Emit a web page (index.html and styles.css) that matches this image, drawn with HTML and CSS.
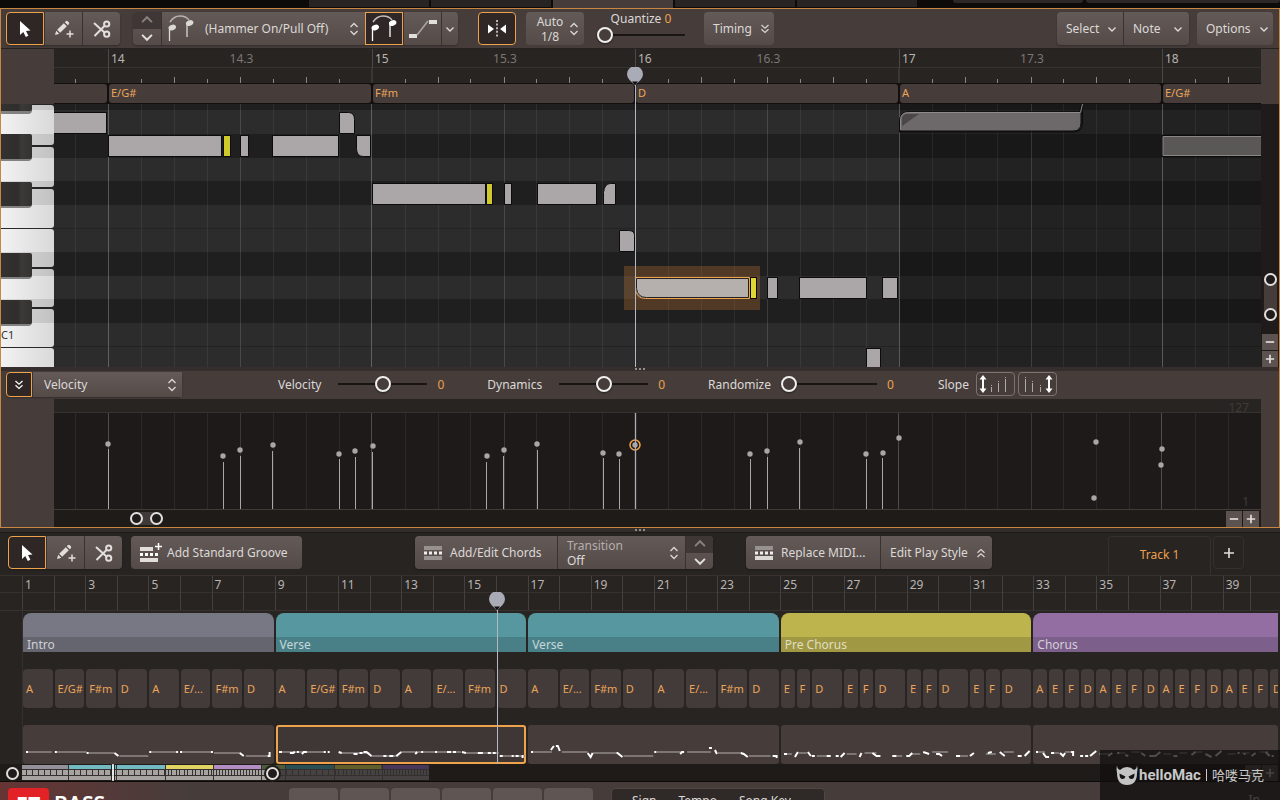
FILE: index.html
```html
<!DOCTYPE html>
<html lang="en">
<head>
<meta charset="UTF-8" />
<meta name="viewport" content="width=device-width, initial-scale=1.0"/>
<title>EZ Bass - Grid Editor</title>
<link rel="stylesheet" href="styles.css">
</head>
<body>

<svg class="defs" aria-hidden="true">
  <symbol id="i-arrow" viewBox="0 0 20 20"><path d="M5 2v14l3.300-3 2.500 5 2.600-1.300-2.400-4.700 4.500-.4z" fill="#fff"/></symbol>
  <symbol id="i-pencil" viewBox="0 0 20 20"><path d="M1 16l1.200-4.200 3 3zM3.200 10.800l6.600-6.600 3 3-6.600 6.600zM10.800 3.200l1-1q1-.8 2 .1l1 1q.9 1 0 2l-1 1z" fill="#e2dedc"/><path d="M16 11.500v7M12.500 15h7" stroke="#e2dedc" stroke-width="1.500"/></symbol>
  <symbol id="i-cut" viewBox="0 0 20 20"><g fill="none" stroke="#e2dedc" stroke-width="2"><path d="M2 4l10.500 9.500M2.500 17L12.500 7"/><circle cx="14.700" cy="5" r="2.600"/><circle cx="14.700" cy="15.200" r="2.600"/></g></symbol>
  <symbol id="i-down" viewBox="0 0 10 10"><path d="M1.500 3.500L5 7l3.500-3.500" fill="none" stroke="currentColor" stroke-width="1.400"/></symbol>
  <symbol id="i-up" viewBox="0 0 10 10"><path d="M1.500 6.500L5 3l3.500 3.500" fill="none" stroke="currentColor" stroke-width="1.400"/></symbol>
  <symbol id="i-updown" viewBox="0 0 10 14"><path d="M1.500 5L5 1.500 8.500 5M1.500 9L5 12.500 8.500 9" fill="none" stroke="currentColor" stroke-width="1.300"/></symbol>
  <symbol id="i-dbldown" viewBox="0 0 10 10"><path d="M1.500 1L5 4.200 8.500 1M1.500 5.300L5 8.500l3.500-3.200" fill="none" stroke="currentColor" stroke-width="1.200"/></symbol>
  <symbol id="i-dblup" viewBox="0 0 10 10"><path d="M1.500 4.700L5 1.500l3.500 3.200M1.500 9L5 5.800 8.500 9" fill="none" stroke="currentColor" stroke-width="1.200"/></symbol>
  <symbol id="i-slur" viewBox="0 0 28 28"><path d="M3 7Q7 1 13 1T22 5" fill="none" stroke="currentColor" stroke-width="1.500" opacity=".7"/><path d="M2.500 26V12M20 22V7" stroke="currentColor" stroke-width="1.300"/><ellipse cx="5.300" cy="12.500" rx="3.800" ry="2.800" transform="rotate(-22 5.300 12.500)" fill="currentColor"/><ellipse cx="22.700" cy="8" rx="3.800" ry="2.800" transform="rotate(-22 22.700 8)" fill="currentColor"/></symbol>
  <symbol id="i-slide" viewBox="0 0 30 24"><path d="M1 17h8v4H1zM21 3h8v4h-8z" fill="#e2dedc"/><path d="M9 18L20 4" stroke="#aaa4a2" stroke-width="1.600"/></symbol>
  <symbol id="i-groove" viewBox="0 0 18 16"><path d="M0 1h18v4H0z" fill="#97918f"/><path d="M0 11h18v4H0z" fill="currentColor"/><path d="M0 6.500h3v3H0zM5 6.500h3v3H5zM10 6.500h3v3h-3zM15 6.500h3v3h-3z" fill="#f0eeec"/></symbol>
  <symbol id="i-pin" viewBox="0 0 18 20"><path d="M9 19Q7 16 3.500 13A8 8 0 1 1 14.500 13Q11 16 9 19z" fill="#a9acb6"/><path d="M6 14.500h6L9 18.500z" fill="#111"/></symbol>
</svg>

<div class="top-strip">
  <span class="top-tab"></span><span class="top-tab"></span><span class="top-tab active"></span><span class="top-tab"></span><span class="top-tab"></span>
  <span class="top-box"></span><span class="top-box wide"></span>
</div>

<section class="editor">
  <div class="toolbar">
    <div class="group">
      <button class="btn tool on" aria-label="Select tool"><svg class="i20"><use href="#i-arrow"/></svg></button>
      <button class="btn tool" aria-label="Draw tool"><svg class="i20"><use href="#i-pencil"/></svg></button>
      <button class="btn tool" aria-label="Cut tool"><svg class="i20"><use href="#i-cut"/></svg></button>
    </div>
    <div class="group articulation">
      <div class="stepper">
        <button class="off" aria-label="Previous articulation"><svg class="i14"><use href="#i-up"/></svg></button>
        <button aria-label="Next articulation"><svg class="i14"><use href="#i-down"/></svg></button>
      </div>
      <div class="pick pick-art">
        <svg class="i28"><use href="#i-slur"/></svg>
        <select aria-label="Articulation"><option>(Hammer On/Pull Off)</option></select>
        <svg class="updown"><use href="#i-updown"/></svg>
      </div>
      <button class="btn tool on" aria-label="Hammer on"><svg class="i28"><use href="#i-slur"/></svg></button>
      <button class="btn tool" aria-label="Slide"><svg class="i30"><use href="#i-slide"/></svg></button>
      <button class="btn thin" aria-label="More articulations"><svg class="i10"><use href="#i-down"/></svg></button>
    </div>
    <button class="btn tool on snap" aria-label="Snap to grid"><svg class="i20" viewBox="0 0 20 20"><path d="M1 5.500v9l6-4.500zM19 5.500v9l-6-4.500z" fill="#fff"/><path d="M10 1v18" stroke="#fff" stroke-width="1.300" stroke-dasharray="2 1.600"/></svg></button>
    <div class="pick pick-grid">
      <div class="stack">
        <label for="grid-size">Auto</label>
        <select id="grid-size"><option>1/8</option></select>
      </div>
      <svg class="updown"><use href="#i-updown"/></svg>
    </div>
    <div class="quantize">
      <div><label for="quantize">Quantize</label> <output>0</output></div>
      <input type="range" id="quantize" min="0" max="100" value="0">
    </div>
    <button class="btn spread timing">Timing <svg class="i10"><use href="#i-dbldown"/></svg></button>
    <div class="group menus">
      <button class="btn spread menu">Select <svg class="i10"><use href="#i-down"/></svg></button>
      <button class="btn spread menu">Note <svg class="i10"><use href="#i-down"/></svg></button>
    </div>
    <button class="btn spread options">Options <svg class="i10"><use href="#i-down"/></svg></button>
  </div>

  <div class="roll">
    <div class="keys">
      <svg viewBox="0 0 53 263" preserveAspectRatio="none" aria-hidden="true">
        <defs>
          <linearGradient id="ivory"><stop offset="0" stop-color="#f4f4f4"/><stop offset="1" stop-color="#d9d9d9"/></linearGradient>
          <linearGradient id="ebony"><stop offset="0" stop-color="#353232"/><stop offset=".6" stop-color="#302d2d"/><stop offset=".7" stop-color="#3c3939"/><stop offset="1" stop-color="#343131"/></linearGradient>
        </defs>
        <path d="M0 0h53v263H0z" fill="#2b2828"/>
        <g fill="url(#ivory)">
          <rect x="-4" y="1" width="57" height="40" rx="3"/><rect x="-4" y="43" width="57" height="40" rx="3"/>
          <rect x="-4" y="85" width="57" height="39" rx="3"/><rect x="-4" y="125" width="57" height="38" rx="3"/>
          <rect x="-4" y="165" width="57" height="38" rx="3"/><rect x="-4" y="205" width="57" height="38" rx="3"/>
          <rect x="-4" y="244" width="57" height="38" rx="3"/>
        </g>
        <path d="M0 0h53v6H0zM0 30h53v24H0zM0 77h53v24H0zM0 148h53v24H0zM0 195h53v24H0z" fill="#000" opacity=".1"/>
        <g fill="#555" opacity=".7"><rect x="-4" y="-10" width="35" height="20" rx="4"/><rect x="-4" y="33" width="35" height="24" rx="4"/><rect x="-4" y="80" width="35" height="24" rx="4"/><rect x="-4" y="151" width="35" height="24" rx="4"/><rect x="-4" y="198" width="35" height="24" rx="4"/></g>
        <g fill="url(#ebony)"><rect x="-4" y="-10" width="35" height="17" rx="2"/><rect x="-4" y="30" width="35" height="25" rx="2"/><rect x="-4" y="78" width="35" height="24" rx="2"/><rect x="-4" y="149" width="35" height="24" rx="2"/><rect x="-4" y="196" width="35" height="24" rx="2"/></g>
      </svg>
      <span class="key-name">C1</span>
    </div>

    <div class="roll-main">
      <div class="bars ruler">
        <div></div>
        <div class="bar"><span>14</span><small>14.3</small></div>
        <div class="bar"><span>15</span><small>15.3</small></div>
        <div class="bar"><span>16</span><small>16.3</small></div>
        <div class="bar"><span>17</span><small>17.3</small></div>
        <div class="bar"><span>18</span></div>
      </div>
      <svg class="ticks" viewBox="0 0 1207 15" preserveAspectRatio="none" aria-hidden="true">
        <path d="M54.500 0v15M318 0v15M581.500 0v15M845 0v15M1108.500 0v15" stroke="#4c4846"/>
        <path d="M21.500 11v4M87.500 11v4M153.500 11v4M219.500 11v4M285.500 11v4M351.500 11v4M416.500 11v4M482.500 11v4M548.500 11v4M614.500 11v4M680.500 11v4M746.500 11v4M812.500 11v4M878.500 11v4M943.500 11v4M1009.500 11v4M1075.500 11v4M1141.500 11v4M120.500 9v6M186.500 9v6M252.500 9v6M384.500 9v6M450.500 9v6M515.500 9v6M647.500 9v6M713.500 9v6M779.500 9v6M911.500 9v6M977.500 9v6M1042.500 9v6M1174.500 9v6" stroke="#8a8583"/>
      </svg>
      <div class="bars chord-lane">
        <span></span><span>E/G#</span><span>F#m</span><span>D</span><span>A</span><span>E/G#</span>
      </div>
      <svg class="canvas" viewBox="0 0 1207 263" preserveAspectRatio="none" role="img" aria-label="Notes">
        <path d="M0 0h1207v263H0z" fill="#2c2c2c"/>
        <path d="M0 0h1207v6H0zM0 30h1207v24H0zM0 77h1207v24H0zM0 148h1207v24H0zM0 195h1207v24H0z" fill="#1f1f1f"/>
        <path d="M0 124.500h1207M0 242.500h1207" stroke="#232323"/>
        <path d="M845 0h362v263H845z" fill="#000" opacity=".22"/>
        <path d="M21.500 0v263M87.500 0v263M120.500 0v263M153.500 0v263M219.500 0v263M252.500 0v263M285.500 0v263M351.500 0v263M384.500 0v263M416.500 0v263M482.500 0v263M515.500 0v263M548.500 0v263M614.500 0v263M647.500 0v263M680.500 0v263M746.500 0v263M779.500 0v263M812.500 0v263M878.500 0v263M911.500 0v263M943.500 0v263M1009.500 0v263M1042.500 0v263M1075.500 0v263M1141.500 0v263M1174.500 0v263" stroke="#fff" opacity=".06"/>
        <path d="M186.500 0v263M450.500 0v263M713.500 0v263M977.500 0v263" stroke="#fff" opacity=".13"/>
        <path d="M54.500 0v263M317.500 0v263M845.500 0v263M1108.500 0v263" stroke="#fff" opacity=".25"/>
        <rect x="570" y="162" width="136" height="44" fill="#e28c3c" opacity=".25"/>
        <g fill="#aba7a8" stroke="#0c0c0c">
          <rect x="-2.500" y="8.500" width="55" height="21"/>
          <rect x="54.500" y="31.500" width="113" height="21"/>
          <rect x="186.500" y="31.500" width="8" height="21"/>
          <rect x="218.500" y="31.500" width="66" height="21"/>
          <path d="M285.500 8.500h9q6 0 6 7v14h-15zM302.500 31.500h14v21h-7q-7 0-7-8z"/>
          <rect x="318.500" y="79.500" width="113" height="21"/>
          <rect x="450.500" y="79.500" width="7" height="21"/>
          <rect x="483.500" y="79.500" width="59" height="21"/>
          <path d="M561.500 79.500v21h-12v-12q1-9 7-9zM565.500 126.500h9q6 0 6 5v16h-15z"/>
          <rect x="713.500" y="173.500" width="10" height="21"/>
          <rect x="745.500" y="173.500" width="67" height="21"/>
          <rect x="828.500" y="173.500" width="15" height="21"/>
          <rect x="812.500" y="244.500" width="14" height="21"/>
        </g>
        <path d="M581.500 173.500h114v21h-104q-9 0-10-9z" fill="#b5b0ad" stroke="#222"/>
        <path d="M581.500 173.500h114v21h-104q-9 0-10-9z" fill="none" stroke="#eda24b"/>
        <path d="M582.500 174.500h112v19h-102q-9 0-10-9z" fill="none" stroke="#222"/>
        <g fill="#cfc92c" stroke="#0c0c0c"><rect x="169.500" y="31.500" width="7" height="21"/><rect x="432.500" y="79.500" width="6" height="21"/><rect x="696.500" y="173.500" width="6" height="21" fill="#ded632"/></g>
        <path d="M845.500 28.500V17q0-9 9-9h171l2-8M1028.500 0v20q-1 8-8 8h-175" fill="none" stroke="#0c0c0c"/>
        <path d="M846 27V16q0-8 8-8h173v11q0 8-8 8z" fill="#6d696a" stroke="#0c0c0c"/>
        <path d="M846.500 26V16q0-7.500 8-7.500h172L1028.500 0" fill="none" stroke="#8e8a8a"/>
        <path d="M848 22V14q1-4 5-4h12z" fill="#4b4748"/>
        <rect x="1108.500" y="31.500" width="101" height="21" fill="#5a5757" stroke="#0c0c0c"/>
        <path d="M1207 32.500h-98v19h98" fill="none" stroke="#8a8686"/>
      </svg>
      <div class="playhead roll-head"><svg><use href="#i-pin"/></svg></div>
    </div>

    <div class="gutter">
      <div class="v-range"><button class="knob" aria-label="Zoom top"></button><button class="knob" aria-label="Zoom bottom"></button></div>
      <button class="mini" aria-label="Zoom out vertically"><svg viewBox="0 0 12 12"><path d="M1 6h10" stroke="#e2dedc" stroke-width="2"/></svg></button>
      <button class="mini" aria-label="Zoom in vertically"><svg viewBox="0 0 12 12"><path d="M1 6h10M6 1v10" stroke="#e2dedc" stroke-width="2"/></svg></button>
    </div>
  </div>

  <div class="splitter"><i></i><i></i><i></i></div>

  <div class="toolbar lane-bar">
    <div class="group">
      <button class="btn on fold" aria-label="Collapse lane"><svg class="i10"><use href="#i-dbldown"/></svg></button>
      <div class="pick pick-lane">
        <select aria-label="Lane"><option>Velocity</option></select>
        <svg class="updown"><use href="#i-updown"/></svg>
      </div>
    </div>
    <div class="slider first"><label for="velocity">Velocity</label><input type="range" id="velocity" value="50"><output>0</output></div>
    <div class="slider"><label for="dynamics">Dynamics</label><input type="range" id="dynamics" value="50"><output>0</output></div>
    <div class="slider wide"><label for="randomize">Randomize</label><input type="range" id="randomize" value="0"><output>0</output></div>
    <div class="slope">
      <span>Slope</span>
      <button aria-label="Slope up"><svg viewBox="0 0 36 20"><path d="M6 1l3.500 4.500h-2.500v9h2.500L6 19l-3.500-4.500h2.500v-9H2.500z" fill="#fff"/><path d="M14.500 13v5M21.500 9v9M28.500 5v13M14.500 11v1M21.500 7v1M28.500 3v1" stroke="#aaa"/></svg></button>
      <button aria-label="Slope down"><svg viewBox="0 0 36 20"><path d="M30 1l3.500 4.500h-2.500v9h2.500L30 19l-3.500-4.500h2.500v-9h-2.500z" fill="#fff"/><path d="M21.500 13v5M13.500 9v9M6.500 5v13M21.500 11v1M13.500 7v1M6.500 3v1" stroke="#aaa"/></svg></button>
    </div>
  </div>

  <div class="lane">
    <div class="lane-head">127</div>
    <div class="lane-graph">
      <svg class="canvas" viewBox="0 0 1207 96" preserveAspectRatio="none" role="img" aria-label="Velocities">
        <path d="M21.500 0v96M87.500 0v96M120.500 0v96M153.500 0v96M219.500 0v96M252.500 0v96M285.500 0v96M351.500 0v96M384.500 0v96M416.500 0v96M482.500 0v96M515.500 0v96M548.500 0v96M614.500 0v96M647.500 0v96M680.500 0v96M746.500 0v96M779.500 0v96M812.500 0v96M878.500 0v96M911.500 0v96M943.500 0v96M1009.500 0v96M1042.500 0v96M1075.500 0v96M1141.500 0v96M1174.500 0v96" stroke="#fff" opacity=".06"/>
        <path d="M186.500 0v96M450.500 0v96M713.500 0v96M977.500 0v96" stroke="#fff" opacity=".13"/>
        <path d="M54.500 0v96M317.500 0v96M844.500 0v96M1107.500 0v96" stroke="#fff" opacity=".22"/>
        <path d="M54.500 36v60M169.500 49v47M186.500 43v53M218.500 38v58M285.500 46v50M301.500 44v52M318.500 39v57M432.500 49v47M449.500 43v53M483.500 37v59M549.500 45v51M565.500 46v50M696.500 46v50M713.500 44v52M745.500 35v61M812.500 46v50M828.500 45v51" stroke="#aaa6a6"/>
        <g fill="#aaa6a4">
          <circle cx="54" cy="31" r="2.700"/><circle cx="169" cy="43" r="2.700"/><circle cx="186" cy="37" r="2.700"/><circle cx="219" cy="32" r="2.700"/><circle cx="285" cy="41" r="2.700"/><circle cx="301" cy="38" r="2.700"/><circle cx="319" cy="33" r="2.700"/>
          <circle cx="433" cy="43" r="2.700"/><circle cx="450" cy="37" r="2.700"/><circle cx="483" cy="31" r="2.700"/><circle cx="549" cy="40" r="2.700"/><circle cx="565" cy="41" r="2.700"/><circle cx="581" cy="32" r="2.700"/>
          <circle cx="696" cy="41" r="2.700"/><circle cx="713" cy="38" r="2.700"/><circle cx="746" cy="29" r="2.700"/><circle cx="812" cy="41" r="2.700"/><circle cx="829" cy="40" r="2.700"/><circle cx="845" cy="25" r="2.700"/>
          <circle cx="1042" cy="29" r="2.700"/><circle cx="1040" cy="85" r="2.700"/><circle cx="1108" cy="36" r="2.700"/><circle cx="1107" cy="52" r="2.700"/>
        </g>
        <circle cx="581" cy="32" r="5" fill="none" stroke="#f2a24c" stroke-width="1.500"/>
        <path d="M581.500 0v96" stroke="#a9acb6" stroke-width="1.300"/>
      </svg>
      <span class="lane-min">1</span>
    </div>
    <div class="lane-scroll">
      <div class="h-range"><button class="knob" aria-label="Scroll start"></button><button class="knob" aria-label="Scroll end"></button></div>
      <button class="mini" aria-label="Zoom out"><svg viewBox="0 0 12 12"><path d="M1 6h10" stroke="#e2dedc" stroke-width="2"/></svg></button>
      <button class="mini" aria-label="Zoom in"><svg viewBox="0 0 12 12"><path d="M1 6h10M6 1v10" stroke="#e2dedc" stroke-width="2"/></svg></button>
    </div>
  </div>
</section>

<div class="splitter dark"><i></i><i></i><i></i></div>

<section class="song">
  <div class="toolbar song-bar">
    <div class="group">
      <button class="btn tool on" aria-label="Select tool"><svg class="i20"><use href="#i-arrow"/></svg></button>
      <button class="btn tool" aria-label="Draw tool"><svg class="i20"><use href="#i-pencil"/></svg></button>
      <button class="btn tool" aria-label="Cut tool"><svg class="i20"><use href="#i-cut"/></svg></button>
    </div>
    <button class="btn groove"><svg class="i24" viewBox="0 0 24 20"><path d="M0 4h13v4H0zM0 15h18v4H0z" fill="#e2dedc"/><path d="M0 10h3v3H0zM5 10h3v3H5zM10 10h3v3h-3zM15 10h3v3h-3z" fill="#fff"/><path d="M18.500 0v7M15 3.500h7" stroke="#fff" stroke-width="1.500"/></svg>Add Standard Groove</button>
    <div class="group chords-group">
      <button class="btn chords"><svg class="i18 dim"><use href="#i-groove"/></svg>Add/Edit Chords</button>
      <div class="pick pick-trans">
        <div class="stack left">
          <label for="transition">Transition</label>
          <select id="transition"><option>Off</option></select>
        </div>
        <svg class="updown"><use href="#i-updown"/></svg>
      </div>
      <div class="stepper">
        <button class="off" aria-label="Previous transition"><svg class="i14"><use href="#i-up"/></svg></button>
        <button aria-label="Next transition"><svg class="i14"><use href="#i-down"/></svg></button>
      </div>
    </div>
    <div class="group midi-group">
      <button class="btn midi"><svg class="i18"><use href="#i-groove"/></svg>Replace MIDI...</button>
      <button class="btn spread style">Edit Play Style <svg class="i10"><use href="#i-dblup"/></svg></button>
    </div>
    <div class="tracks">
      <button class="track-tab">Track 1</button>
      <button class="track-add" aria-label="Add track"><svg class="i12" viewBox="0 0 12 12"><path d="M1 6h10M6 1v10" stroke="#e2dedc" stroke-width="1.600"/></svg></button>
    </div>
  </div>

  <div class="arranger">
    <div class="song-ruler">
      <span>1</span><span>3</span><span>5</span><span>7</span><span>9</span><span>11</span><span>13</span><span>15</span><span>17</span><span>19</span><span>21</span><span>23</span><span>25</span><span>27</span><span>29</span><span>31</span><span>33</span><span>35</span><span>37</span><span>39</span>
    </div>
    <div class="song-lanes">
      <div class="parts">
        <div class="part intro">Intro</div>
        <div class="part verse">Verse</div>
        <div class="part verse">Verse</div>
        <div class="part pre">Pre Chorus</div>
        <div class="part chorus">Chorus</div>
      </div>
      <div class="chords-row">
        <span>A</span><span>E/G#</span><span>F#m</span><span>D</span><span>A</span><span>E/...</span><span>F#m</span><span>D</span>
        <span>A</span><span>E/G#</span><span>F#m</span><span>D</span><span>A</span><span>E/...</span><span>F#m</span><span>D</span>
        <span>A</span><span>E/...</span><span>F#m</span><span>D</span><span>A</span><span>E/...</span><span>F#m</span><span>D</span>
        <span class="half">E</span><span class="half">F</span><span>D</span><span class="half">E</span><span class="half">F</span><span>D</span>
        <span class="half">E</span><span class="half">F</span><span>D</span><span class="half">E</span><span class="half">F</span><span>D</span>
        <span class="half">A</span><span class="half">E</span><span class="half">F</span><span class="half">D</span><span class="half">A</span><span class="half">E</span><span class="half">F</span><span class="half">D</span>
        <span class="half">A</span><span class="half">E</span><span class="half">F</span><span class="half">D</span><span class="half">A</span><span class="half">E</span><span class="half">F</span><span class="half cut">D</span>
      </div>
      <div class="parts clips">
        <div class="clip"><svg viewBox="0 0 252 38" preserveAspectRatio="none"><path d="M4 27h25M33 27h31M66 28h26M97 31h29M129 27h26M160 27h30M192 28h27M224 31h22" class="long"/><path d="M3 27h2M32 27h2M64 28h2M92 28l4 3M127 27h2M154 27h2M158 27h2M189 27h2M218 28l4 3M246 31h2v-4" class="short"/></svg></div>
        <div class="clip selected"><svg viewBox="0 0 252 38" preserveAspectRatio="none"><path d="M4 27h46M64 28h30M95 31h28M126 27h60M190 28h34M226 31h24" class="long"/><path d="M3 27h3M14 28h3l2-1M21 27h2M26 29l2-2h3M48 27h2M52 27h2M63 27l3 1M78 29h4M84 28h3M88 27h3l5 4M108 31h3M114 31h4M121 31l5-4M140 29l2-2M146 27h2M160 27h2M172 27h4M178 27h3M187 27l4 1M203 28h5M213 28h3M218 28h3M225 31h3M237 31h2M241 31h3M248 33v-3" class="short"/></svg></div>
        <div class="clip"><svg viewBox="0 0 252 38" preserveAspectRatio="none"><path d="M4 27h20M34 27h26M65 28h24M96 31h30M129 27h26M160 27h24M191 28h24M222 31h22" class="long"/><path d="M3 27h2M23 25l3-4M28 21h2l2 5M60 28l3 4 2-4M89 28h1l5 4M127 27h2M153 29l2-2h2M182 23h3M188 25l2 4M214 28l3 1 4 3M246 31h4v2" class="short"/></svg></div>
        <div class="clip"><svg viewBox="0 0 252 38" preserveAspectRatio="none"><path d="M3 29h8M18 28h8M36 31h12M66 29h10M84 28h12M112 31h10M130 29h10M152 27h16M176 31h12M206 29h10M224 27h10" class="long"/><path d="M3 29h3M14 32l3-5M27 27l3 4M31 31h3M46 31h4M55 31h3M60 32l4-4M79 32l2-4M92 28l4 3h4M112 31h4M126 31h3l3-3M143 27l6 2M156 29h3l3 2M176 31h4M190 31l4-3M208 28l4-1M220 27l5 4M238 31h4M245 31l5-5" class="short"/></svg></div>
        <div class="clip last"><svg viewBox="0 0 244 38" preserveAspectRatio="none"><path d="M3 27h9M18 28h8M32 27h9M66 29h10M84 28h8M98 27h9M130 29h8M146 28h8M160 27h9M194 29h8M208 28h8M226 27h9" class="long"/><path d="M3 27h2M10 28l3 4h3M18 28h3M27 28l3 3 2-3M38 27h2v4M47 31h3M52 31h3M57 31l6-5M75 31l4-3M84 28h2M92 30l3 1M108 28l4 3M116 31h6l5-4M140 31h4M158 30l4-3M172 29l6 3M182 31l6-5M204 28h2M210 29h2M218 31l4-3M232 27l4 4M238 31h2" class="short"/></svg></div>
      </div>
      <div class="playhead song-head"><svg><use href="#i-pin"/></svg></div>
    </div>
  </div>

  <div class="navigator">
    <svg viewBox="0 0 1280 17" preserveAspectRatio="none" aria-hidden="true">
      <path d="M22 1h250v15H22z" fill="#a7a3a0"/><path d="M272 1h157v15H272z" fill="#464242"/>
      <path d="M22 1h46v4H22z" fill="#93909a"/><path d="M69 1h96v4H69z" fill="#73b9c1"/><path d="M166 1h47v4h-47z" fill="#e0d362"/><path d="M214 1h47v4h-47z" fill="#b48cc4"/><path d="M262 1h23v4h-23z" fill="#4d5c38"/><path d="M286 1h47v4h-47z" fill="#284f53"/><path d="M335 1h46v4h-46z" fill="#625e29"/><path d="M383 1h46v4h-46z" fill="#47365a"/>
      <path d="M22 5.500h407M22 11.500h407" stroke="#34302f"/>
      <path d="M26 8.500h140M286 8.500h48" stroke="#34302f" stroke-width="5" stroke-dasharray="1 5"/>
      <path d="M168 8.500h46M335 8.500h47" stroke="#34302f" stroke-width="5" stroke-dasharray="1 2 1 4"/>
      <path d="M216 8.500h46M384 8.500h45" stroke="#34302f" stroke-width="5" stroke-dasharray="1 2"/>
      <path d="M68.500 1v15M116.500 1v15M165.500 1v15M213.500 1v15M261.500 1v15M285.500 1v15M334.500 1v15M382.500 1v15" stroke="#34302f"/>
      <path d="M111.500 0v17M114.500 0v17" stroke="#222"/><path d="M113 0v17" stroke="#fff" stroke-width="1.500"/>
    </svg>
    <button class="knob nav-start" aria-label="View start"></button>
    <button class="knob nav-end" aria-label="View end"></button>
    <div class="nav-zoom"><button class="mini" aria-label="Zoom out song"><svg viewBox="0 0 12 12"><path d="M1 6h10" stroke="#e2dedc" stroke-width="2"/></svg></button><button class="mini" aria-label="Zoom in song"><svg viewBox="0 0 12 12"><path d="M1 6h10M6 1v10" stroke="#e2dedc" stroke-width="2"/></svg></button></div>
  </div>
</section>

<footer class="transport">
  <div class="logo"><b>EZ</b><strong>BASS</strong></div>
  <div class="transport-keys"><span></span><span></span><span></span><span></span><span></span><span></span></div>
  <div class="display"><span>Sign</span><span>Tempo</span><span>Song Key</span></div>
  <span class="input-name">In</span>
</footer>

<div class="watermark">
  <svg viewBox="0 0 22 22" aria-hidden="true"><path d="M1 1q0 4 3 5 3-3 7-3t7 3q3-1 3-5 1 4 0 8 0 12-10 12T1 9Q0 5 1 1z" fill="#c4c4c4"/><path d="M3.500 9.500l6 3q-1 3-3.500 2.500T3.500 9.500zM18.500 9.500l-6 3q1 3 3.500 2.500t2.500-5.500z" fill="#151313"/></svg>
  <b>helloMac</b><i></i><span lang="zh">哈喽马克</span>
</div>

</body>
</html>
```
FILE: styles.css
```css
* { margin: 0; padding: 0; box-sizing: border-box; }
body {
  height: 100vh;
  display: flex;
  flex-direction: column;
  position: relative;
  overflow: hidden;
  background: #282422;
  color: #dcd8d6;
  font-family: "Noto Sans", sans-serif;
  font-size: 12px;
}
button, select, input { font: inherit; color: inherit; border: none; background: none; }
button { cursor: pointer; display: flex; align-items: center; justify-content: center; }
select { appearance: none; outline: none; }
svg { display: block; flex: none; }
.defs { position: absolute; width: 0; height: 0; }
output { color: #eca04e; }

.i10 { width: 10px; height: 10px; }
.i12 { width: 12px; height: 12px; }
.i14 { width: 14px; height: 14px; }
.i18 { width: 18px; height: 16px; }
.i20 { width: 20px; height: 20px; }
.i24 { width: 24px; height: 20px; }
.i28 { width: 28px; height: 28px; }
.i30 { width: 30px; height: 24px; }
.updown { width: 10px; height: 14px; }
.dim { color: #97918f; }

/* strip above the editor */
.top-strip { display: flex; flex: none; height: 8px; padding-left: 309px; background: #0c0b0a; }
.top-tab { width: 120px; margin-right: 2px; height: 7px; background: #282423; }
.top-tab.active { height: 8px; background: #463d3b; }
.top-box { width: 130px; height: 3px; margin-left: 34px; border-radius: 0 0 3px 3px; background: #2c2827; }
.top-box.wide { flex: 1; margin-left: 3px; }

/* buttons */
.toolbar { display: flex; align-items: flex-start; height: 40px; padding: 3px 6px 0 5px; background: #463d3b; border-bottom: 1px solid #262221; }
.group { display: flex; height: 33px; border-radius: 4px; box-shadow: 0 1px 2px rgba(0, 0, 0, 0.3); }
.group > * + * { border-left: 1px solid #3a3230; }
.group > :first-child { border-radius: 4px 0 0 4px; }
.group > :last-child { border-radius: 0 4px 4px 0; }
.btn, .pick, .stepper { height: 33px; background: linear-gradient(#645b59, #544b49); }
.btn { gap: 8px; border-radius: 4px; }
.btn.spread { justify-content: space-between; padding: 0 6px 0 9px; }
.group > .btn { border-radius: 0; }
.group > .btn:first-child { border-radius: 4px 0 0 4px; }
.group > .btn:last-child { border-radius: 0 4px 4px 0; }
.btn.tool { width: 38px; }
.group > .btn.on, .btn.on { border: 1px solid #eda24b; background: #2e2725; color: #fff; }
.btn.thin { width: 17px; }
.stepper { width: 28px; display: flex; flex-direction: column; overflow: hidden; }
.stepper button { flex: 1; width: 100%; color: #e2dedc; }
.stepper .off { background: #3f3735; color: #87807e; }
.pick { display: flex; align-items: center; border-radius: 4px; }
.group > .pick { border-radius: 0; }
.stack { display: flex; flex-direction: column; text-align: center; }
.stack label, .stack select { line-height: 15px; height: 15px; }
.stack select { text-align-last: center; }
.stack.left, .stack.left select { text-align: left; text-align-last: left; }
.stack.left label { color: #b5aeac; }

.articulation { margin-left: 13px; }
.pick-art { width: 204px; padding: 0 6px 0 5px; }
.pick-art select { flex: 1; min-width: 0; padding-left: 10px; }
.snap { margin-left: 20px; }
.pick-grid { width: 58px; margin-left: 10px; padding: 0 5px 0 8px; justify-content: space-between; }
.pick-grid .stack { width: 32px; }
.quantize { width: 88px; margin-left: 13px; text-align: center; line-height: 15px; }
.quantize div { margin-top: -1px; }
.quantize input { width: 100%; }
.timing { width: 70px; margin-left: 19px; }
.menus { margin-left: auto; }
.menu { width: 66px; }
.options { width: 76px; margin-left: 8px; }

/* range inputs */
input[type=range] { appearance: none; display: block; height: 18px; background: linear-gradient(#1a1515, #1a1515) center / 100% 2px no-repeat; }
input[type=range]::-webkit-slider-thumb { appearance: none; width: 16px; height: 16px; border: 2px solid #f2f0ee; border-radius: 50%; background: #463d3b; box-shadow: 0 1px 2px rgba(0, 0, 0, 0.5); }
.knob { width: 13px; height: 13px; flex: none; border: 2px solid #e2dedc; border-radius: 50%; background: #1f1b1a; }

/* editor */
.editor { flex: none; border: 1px solid #c98640; background: #463d3b; }
.roll { display: flex; }
.keys { width: 53px; padding-top: 55px; position: relative; }
.keys svg { width: 53px; height: 263px; }
.key-name { position: absolute; left: 0; bottom: 25px; font-size: 11px; line-height: 15px; color: #333; }
.roll-main { flex: 1; min-width: 0; position: relative; background: #282422; }
.bars { display: grid; grid-template-columns: 54fr 264fr 263fr 264fr 263fr 99fr; }
.ruler { height: 19px; border-bottom: 1px solid #37322f; color: #b9b4b2; line-height: 19px; }
.bar { display: grid; grid-template-columns: 1fr auto 1fr; padding-left: 2px; border-left: 1px solid #4c4846; }
.bar small { font-size: 12px; color: #7b7674; }
.ticks { width: 100%; height: 15px; }
.chord-lane { height: 21px; background: #120f0e; padding: 1px 0; font-size: 11px; line-height: 18px; color: #eca55a; }
.chord-lane span { margin-right: 1px; padding-left: 2px; margin-left: 1px; border-radius: 3px; background: #463d3b; }
.chord-lane span:first-child { margin-left: 0; border-radius: 0 3px 3px 0; }
.chord-lane span:last-child { margin-right: 0; border-radius: 3px 0 0 3px; }
.canvas { width: 100%; height: 263px; }
.gutter { width: 18px; margin-top: 55px; display: flex; flex-direction: column; align-items: center; justify-content: flex-end; gap: 1px; background: #1f1b1a; }
.v-range { display: flex; flex-direction: column; justify-content: space-between; height: 48px; margin-bottom: 12px; background: #463d3b; border-radius: 6px; }
.mini { width: 16px; height: 16px; background: #5c5351; }
.mini svg { width: 10px; height: 10px; }

.playhead { position: absolute; bottom: 0; width: 19px; margin-left: -9px; padding-left: 1px; }
.playhead::before { content: ""; position: absolute; top: 18px; bottom: 0; left: 9px; width: 1px; background: #b4b7c1; }
.playhead svg { width: 18px; height: 20px; margin-left: -1px; }
.roll-head { top: 18px; left: 48.15%; }
.song-head { top: -19px; left: 37.8%; }

.splitter { flex: none; display: flex; justify-content: center; gap: 2px; height: 4px; padding-top: 1px; background: #352e2c; }
.splitter i { width: 2px; height: 2px; border-radius: 50%; background: #b5aeac; }
.splitter.dark { height: 5px; background: #322d2b; border-bottom: 1px solid #1d1a19; }

/* velocity lane */
.lane-bar { height: 28px; padding: 1px 6px 0 5px; border-bottom: none; }
.lane-bar .group, .lane-bar .btn, .lane-bar .pick { height: 25px; }
.btn.fold { width: 26px; color: #cfcac8; }
.pick-lane { width: 150px; padding: 0 5px 0 11px; }
.pick-lane select { flex: 1; }
.slider, .slope { display: flex; align-items: center; height: 24px; margin-left: 43px; }
.slider.first { margin-left: 96px; }
.slider input { width: 89px; margin: 0 10px 0 17px; }
.slider.wide input { width: 96px; margin-left: 10px; }
.slope { margin-left: 44px; }
.slope button { width: 39px; height: 24px; margin-left: 3px; border: 1px solid #7c7371; border-radius: 4px; }
.slope span { margin-right: 4px; }
.slope svg { width: 36px; height: 20px; }
.lane { padding: 0 18px 0 53px; }
.lane-head { height: 14px; padding-right: 12px; line-height: 17px; text-align: right; color: #403a38; background: #282422; border-bottom: 1px solid #37322f; }
.lane-graph { position: relative; background: #1e1a1a; border-bottom: 1px solid #403c3a; }
.lane-graph .canvas { height: 96px; }
.lane-min { position: absolute; right: 12px; bottom: 0; line-height: 15px; color: #403a38; }
.lane-scroll { display: flex; align-items: center; gap: 1px; height: 17px; padding: 0 2px 0 76px; background: #1f1b19; }
.h-range { display: flex; justify-content: space-between; width: 33px; margin-right: auto; border-radius: 6px; background: #3f3a38; }

/* song view */
.song { flex: none; background: #282422; }
.song-bar { height: 42px; padding: 3px 36px 0 8px; background: #282422; border-bottom: none; }
.btn.groove, .btn.chords, .btn.midi { justify-content: flex-start; padding-left: 9px; }
.btn.groove { width: 171px; margin-left: 9px; gap: 3px; }
.chords-group { margin-left: 113px; }
.btn.chords { width: 142px; }
.pick-trans { width: 128px; padding: 0 6px 0 9px; justify-content: space-between; }
.midi-group { margin-left: 33px; }
.btn.midi { width: 134px; }
.style { width: 112px; }
.tracks { display: flex; gap: 2px; margin-left: auto; }
.track-tab { width: 103px; height: 39px; padding-bottom: 4px; border: 1px solid #35302e; border-bottom: none; border-radius: 4px 4px 0 0; color: #eca04e; }
.track-add { width: 31px; height: 33px; border: 1px solid #35302e; border-radius: 4px; }

.song-ruler {
  display: grid;
  grid-template-columns: repeat(19, 8fr) 7fr;
  height: 36px;
  padding: 0 2px 0 22px;
  border: solid #37322f;
  border-width: 1px 0;
  background: linear-gradient(#37322f, #37322f) 0 16px / 100% 1px no-repeat;
  color: #b9b4b2;
  line-height: 17px;
}
.song-ruler span { padding-left: 2px; border-left: 1px solid #45403d; background: linear-gradient(#45403d, #45403d) 50% 0 / 1px 100% no-repeat; }
.song-lanes { position: relative; margin: 0 2px 0 22px; padding-top: 2px; border-left: 1px solid #35302e; }
.parts { display: grid; grid-template-columns: repeat(4, 32fr) 31fr; }
.part { height: 39px; margin-right: 2px; padding: 24px 0 0 4px; line-height: 15px; border-radius: 8px 8px 0 0; color: rgba(255, 255, 255, 0.7); }
.part:last-child { margin-right: 0; border-top-right-radius: 0; }
.intro { background: linear-gradient(#777884 24px, #656570 24px); }
.verse { background: linear-gradient(#5697a0 24px, #498087 24px); }
.pre { background: linear-gradient(#beb44e 24px, #a09843 24px); }
.chorus { background: linear-gradient(#936ea3 24px, #7c5f8a 24px); }
.chords-row { display: grid; grid-template-columns: repeat(79, minmax(0, 2fr)) minmax(0, 1fr); margin: 17px 0; font-size: 11px; line-height: 39px; color: #eca55a; }
.chords-row span { grid-column: span 2; height: 39px; margin-right: 2px; padding-left: 3px; border-radius: 4px; background: #433b39; overflow: hidden; }
.chords-row .half { grid-column: span 1; }
.chords-row .cut { margin-right: 0; border-radius: 4px 0 0 4px; }
.clip { height: 39px; margin-right: 2px; border-radius: 3px; background: #463d3b; overflow: hidden; }
.clip.selected { background: #3f3735; box-shadow: inset 0 0 0 2px #eda24b; }
.clip.last { margin-right: 0; }
.clip svg { width: 100%; height: 38px; }
.clip .long { fill: none; stroke: #7d7674; stroke-width: 2; }
.clip .short { fill: none; stroke: #fff; stroke-width: 2; }

.navigator { position: relative; height: 18px; background: #1f1b19; border-bottom: 1px solid #0c0a0a; }
.navigator > svg { width: 100%; height: 17px; }
.navigator .knob { position: absolute; top: 3px; margin-left: -7px; box-shadow: 0 0 0 2px #1f1b19; }
.nav-start { left: 1%; }
.nav-end { left: 21.3%; }
.nav-zoom { position: absolute; right: 2px; top: 1px; display: flex; gap: 1px; }

/* transport, cut off by the window edge */
.transport { flex: 1; min-height: 0; display: flex; overflow: hidden; padding: 6px 20px 0 8px; background: linear-gradient(90deg, #663534, #463d3b 190px); }
.logo { display: flex; width: 281px; gap: 5px; font-size: 21px; line-height: 32px; color: #fff; }
.logo b { width: 41px; height: 40px; border-radius: 4px; background: #e32227; text-align: center; font-weight: 900; }
.logo strong { font-weight: 600; }
.transport-keys { display: flex; gap: 2px; }
.transport-keys span { width: 49px; height: 30px; border-radius: 4px; background: #5f5654; }
.display { display: flex; gap: 22px; width: 214px; height: 40px; margin-left: 18px; padding: 4px 0 0 20px; border: 1px solid #4f4644; border-radius: 4px; background: #2f2927; line-height: 16px; }
.input-name { margin: 4px 0 0 auto; line-height: 16px; }

.watermark { position: absolute; right: 0; bottom: 0; width: 180px; height: 50px; display: flex; align-items: center; padding-left: 16px; background: rgba(16, 14, 14, 0.74); color: #c8c8c8; }
.watermark svg { width: 22px; height: 22px; }
.watermark b { margin-left: 1px; font-family: Roboto, sans-serif; font-size: 15px; }
.watermark i { width: 1px; height: 12px; margin: 0 5px; background: #c8c8c8; }
.watermark span { font-family: "Noto Sans CJK SC", sans-serif; font-size: 13px; line-height: 18px; }
```
